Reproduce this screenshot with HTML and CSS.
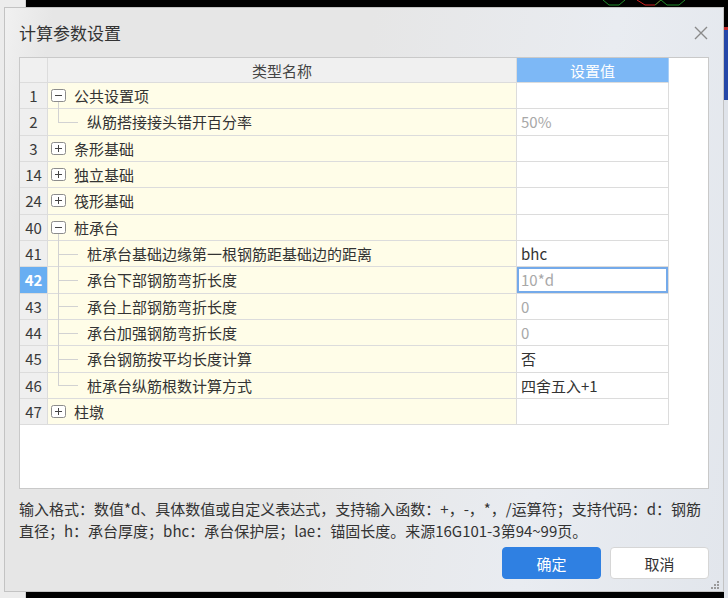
FILE: index.html
```html
<!DOCTYPE html>
<html lang="zh-CN">
<head>
<meta charset="utf-8">
<title>计算参数设置</title>
<link rel="stylesheet" href="styles.css">
</head>
<body>
<div class="app-strip"></div>
<div class="right-strip"></div>
<svg class="bg-lines" width="110" height="7" viewBox="0 0 110 7">
  <path d="M8 0 L14 5 L24 5 L30 0" fill="none" stroke="#1f8a2a" stroke-width="1"/>
  <path d="M42 0 L50 5 L60 5 L66 0" fill="none" stroke="#d32020" stroke-width="1"/>
  <path d="M60 5 L66 0 M66 0 L72 5 L84 5 L90 0" fill="none" stroke="#1f8a2a" stroke-width="1"/>
</svg>

<div class="dialog">
  <div class="title-bar">
    <span class="title">计算参数设置</span>
    <svg class="close" width="14" height="14" viewBox="0 0 14 14">
      <path d="M1 1 L13 13 M13 1 L1 13" stroke="#8a8a8a" stroke-width="1.4" fill="none"/>
    </svg>
  </div>

  <div class="grid-box">
    <div class="grid">
      <div class="h hn"></div>
      <div class="h hc">类型名称</div>
      <div class="h hv">设置值</div>

      <div class="n">1</div>
      <div class="c open"><svg class="tog" width="15" height="13" viewBox="0 0 15 13"><rect x="0.5" y="0.5" width="14" height="12" rx="2" fill="#fff" stroke="#8c8c8c"/><path d="M4 6.5h7" stroke="#444"/></svg><span class="t">公共设置项</span></div>
      <div class="v"></div>

      <div class="n">2</div>
      <div class="c child last"><span class="t">纵筋搭接接头错开百分率</span></div>
      <div class="v dim">50%</div>

      <div class="n">3</div>
      <div class="c"><svg class="tog" width="15" height="13" viewBox="0 0 15 13"><rect x="0.5" y="0.5" width="14" height="12" rx="2" fill="#fff" stroke="#8c8c8c"/><path d="M4 6.5h7 M7.5 3v7" stroke="#444"/></svg><span class="t">条形基础</span></div>
      <div class="v"></div>

      <div class="n">14</div>
      <div class="c"><svg class="tog" width="15" height="13" viewBox="0 0 15 13"><rect x="0.5" y="0.5" width="14" height="12" rx="2" fill="#fff" stroke="#8c8c8c"/><path d="M4 6.5h7 M7.5 3v7" stroke="#444"/></svg><span class="t">独立基础</span></div>
      <div class="v"></div>

      <div class="n">24</div>
      <div class="c"><svg class="tog" width="15" height="13" viewBox="0 0 15 13"><rect x="0.5" y="0.5" width="14" height="12" rx="2" fill="#fff" stroke="#8c8c8c"/><path d="M4 6.5h7 M7.5 3v7" stroke="#444"/></svg><span class="t">筏形基础</span></div>
      <div class="v"></div>

      <div class="n">40</div>
      <div class="c open"><svg class="tog" width="15" height="13" viewBox="0 0 15 13"><rect x="0.5" y="0.5" width="14" height="12" rx="2" fill="#fff" stroke="#8c8c8c"/><path d="M4 6.5h7" stroke="#444"/></svg><span class="t">桩承台</span></div>
      <div class="v"></div>

      <div class="n">41</div>
      <div class="c child"><span class="t">桩承台基础边缘第一根钢筋距基础边的距离</span></div>
      <div class="v">bhc</div>

      <div class="n sel">42</div>
      <div class="c child"><span class="t">承台下部钢筋弯折长度</span></div>
      <div class="v dim focus">10*d</div>

      <div class="n">43</div>
      <div class="c child"><span class="t">承台上部钢筋弯折长度</span></div>
      <div class="v dim">0</div>

      <div class="n">44</div>
      <div class="c child"><span class="t">承台加强钢筋弯折长度</span></div>
      <div class="v dim">0</div>

      <div class="n">45</div>
      <div class="c child"><span class="t">承台钢筋按平均长度计算</span></div>
      <div class="v">否</div>

      <div class="n">46</div>
      <div class="c child last"><span class="t">桩承台纵筋根数计算方式</span></div>
      <div class="v">四舍五入+1</div>

      <div class="n">47</div>
      <div class="c"><svg class="tog" width="15" height="13" viewBox="0 0 15 13"><rect x="0.5" y="0.5" width="14" height="12" rx="2" fill="#fff" stroke="#8c8c8c"/><path d="M4 6.5h7 M7.5 3v7" stroke="#444"/></svg><span class="t">柱墩</span></div>
      <div class="v"></div>
    </div>
  </div>

  <p class="help">输入格式：数值*d、具体数值或自定义表达式，支持输入函数：+，-，*，/运算符；支持代码：d：钢筋直径；h：承台厚度；bhc：承台保护层；lae：锚固长度。来源16G101-3第94~99页。</p>

  <div class="buttons">
    <button class="btn primary">确定</button>
    <button class="btn">取消</button>
  </div>

  <svg class="grip" width="9" height="9" viewBox="0 0 9 9">
    <rect x="6" y="0" width="2" height="2" fill="#9a9a9a"/>
    <rect x="3" y="3" width="2" height="2" fill="#9a9a9a"/>
    <rect x="6" y="3" width="2" height="2" fill="#9a9a9a"/>
    <rect x="0" y="6" width="2" height="2" fill="#9a9a9a"/>
    <rect x="3" y="6" width="2" height="2" fill="#9a9a9a"/>
    <rect x="6" y="6" width="2" height="2" fill="#9a9a9a"/>
  </svg>
</div>
</body>
</html>
```

FILE: styles.css
```css
* { box-sizing: border-box; }

html, body {
  margin: 0;
  padding: 0;
}

body {
  position: relative;
  width: 728px;
  height: 598px;
  overflow: hidden;
  background: #000;
  font-family: "Noto Sans CJK SC", "Microsoft YaHei", sans-serif;
  color: #333;
}

.app-strip {
  position: absolute;
  left: 0;
  top: 0;
  width: 26px;
  height: 598px;
  background: #ececec;
  border-right: 1px solid #cfcfcf;
}

.right-strip {
  position: absolute;
  right: 0;
  top: 0;
  width: 4px;
  height: 598px;
  background: linear-gradient(#000 0 27px, #c62a2a 27px 30px, #2547a8 30px 100px, #dfe3ea 100px);
}

.bg-lines {
  position: absolute;
  left: 595px;
  top: 0;
}

.dialog {
  position: absolute;
  left: 4px;
  top: 7px;
  width: 720px;
  height: 585px;
  padding: 0 14px;
  display: flex;
  flex-direction: column;
  border: 1px solid #c3c3c3;
  background: linear-gradient(100deg, #f1f1f1 0%, #e6e6e6 6%, #e6e6e6 45%, #e9ecf1 75%, #e2e6ec 100%);
}

.title-bar {
  height: 49px;
  flex: none;
  display: flex;
  align-items: center;
  justify-content: space-between;
}

.title {
  font-size: 17px;
  line-height: 20px;
  color: #333;
  margin-top: 0;
}

.close {
  display: block;
  margin-right: 1px;
}

.grid-box {
  flex: none;
  width: 690px;
  height: 432px;
  border: 1px solid #c9c9c9;
  background: #fff;
}

.grid {
  display: grid;
  grid-template-columns: 28px 469px 152px;
  grid-template-rows: 25px repeat(13, 26.33px);
  font-size: 15px;
}

.grid > div {
  border-right: 1px solid #dcdcdc;
  border-bottom: 1px solid #dcdcdc;
  display: flex;
  align-items: center;
  white-space: nowrap;
}

.h {
  background: #f0f0f0;
  justify-content: center;
  color: #444;
}

.hv {
  background: #7db8f6;
  color: #fff;
  border-right-color: #a9cff7 !important;
}

.n {
  background: #efefef;
  justify-content: center;
  color: #3a3a3a;
}

.n.sel {
  background: #68aef2;
  color: #fff;
  font-weight: bold;
}

.c {
  position: relative;
  background: #fffde8;
  padding-left: 3px;
  color: #333;
}

.tog {
  display: block;
  flex: none;
  position: relative;
  z-index: 1;
}

.tog + .t {
  margin-left: 8px;
}

.child {
  padding-left: 39px;
}

.open::before {
  content: "";
  position: absolute;
  left: 10px;
  top: calc(50% + 6px);
  bottom: -1px;
  border-left: 1px solid #d2d2d2;
}

.child::before {
  content: "";
  position: absolute;
  left: 10px;
  top: 0;
  bottom: -1px;
  border-left: 1px solid #d2d2d2;
}

.child.last::before {
  bottom: 50%;
}

.child::after {
  content: "";
  position: absolute;
  left: 10px;
  top: 50%;
  width: 20px;
  border-top: 1px solid #d2d2d2;
}

.v {
  background: #fff;
  padding-left: 4px;
  color: #333;
}

.v.dim {
  color: #a8a8a8;
}

.v.focus {
  box-shadow: inset 0 0 0 2px #74aaea;
}

.help {
  flex: none;
  margin: 9px 0 0;
  width: 692px;
  font-size: 15px;
  line-height: 22px;
  color: #333;
}

.buttons {
  flex: none;
  margin-top: 5px;
  display: flex;
  justify-content: flex-end;
  gap: 9px;
  width: 690px;
}

.btn {
  width: 99px;
  height: 32px;
  border-radius: 4px;
  font-family: inherit;
  font-size: 15px;
  color: #333;
  background: #fff;
  border: 1px solid #d6d6d6;
  padding: 0;
}

.btn.primary {
  background: #2f80e2;
  border-color: #2f80e2;
  color: #fff;
}

.grip {
  position: absolute;
  right: 3px;
  bottom: 1px;
}
```
